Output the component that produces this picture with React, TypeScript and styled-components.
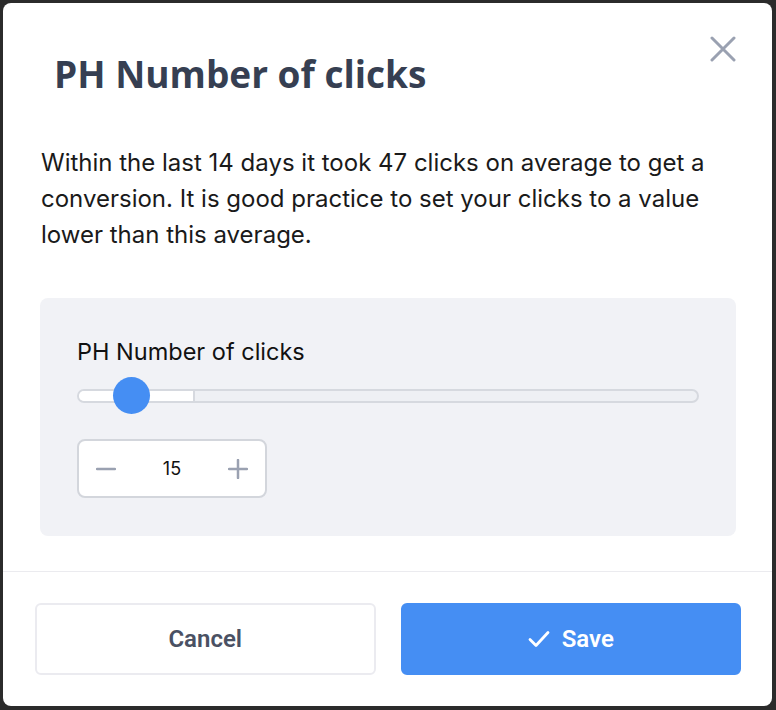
import React, { useState } from "react";
import styled, { createGlobalStyle } from "styled-components";

const Global = createGlobalStyle`
  html, body { margin: 0; padding: 0; background: #2b2b2b; }
  body { width: 776px; height: 710px; overflow: hidden; }
`;

const Dialog = styled.div`
  margin: 3px 0 0 3px;
  width: 769px;
  height: 703px;
  background: #ffffff;
  border-radius: 8px;
  display: flex;
  flex-direction: column;
  position: relative;
  box-sizing: border-box;
`;

const Body = styled.div`
  padding: 50px 36px 0 37px;
  display: flex;
  flex-direction: column;
  flex: 1;
`;

const Title = styled.h1`
  margin: 0 0 0 14px;
  font-family: "Open Sans", sans-serif;
  font-weight: 700;
  font-size: 37px;
  line-height: 41px;
  color: #363f52;
`;

const CloseButton = styled.button`
  position: absolute;
  top: 31px;
  right: 34px;
  width: 30px;
  height: 30px;
  padding: 0;
  border: none;
  background: transparent;
  display: flex;
  align-items: center;
  justify-content: center;
`;

const Description = styled.p`
  margin: 51px 0 0 1px;
  font-family: "Inter", sans-serif;
  font-size: 24px;
  line-height: 36px;
  color: #1a1a1a;
`;

const Panel = styled.div`
  margin-top: 45px;
  background: #f1f2f6;
  border-radius: 8px;
  height: 238px;
  box-sizing: border-box;
  padding: 40px 37px 0 37px;
  display: flex;
  flex-direction: column;
`;

const Label = styled.div`
  font-family: "Inter", sans-serif;
  font-size: 23.5px;
  line-height: 28px;
  color: #111111;
`;

const SliderArea = styled.div`
  margin-top: 11px;
  height: 38px;
  position: relative;
  display: flex;
  align-items: center;
`;

const Track = styled.div`
  width: 100%;
  height: 14px;
  box-sizing: border-box;
  border: 2px solid #d6d9df;
  border-radius: 7px;
  background: #eef0f4;
  overflow: hidden;
  display: flex;
`;

const Fill = styled.div`
  height: 100%;
  background: #ffffff;
  border-right: 2px solid #d6d9df;
`;

const Thumb = styled.div`
  position: absolute;
  top: 0;
  width: 37px;
  height: 37px;
  border-radius: 50%;
  background: #458ef3;
`;

const Stepper = styled.div`
  margin-top: 24px;
  width: 190px;
  height: 59px;
  box-sizing: border-box;
  border: 2px solid #d3d6dc;
  border-radius: 8px;
  background: #ffffff;
  display: flex;
  align-items: center;
  justify-content: space-between;
  padding: 0 16px 0 16px;
`;

const StepButton = styled.button`
  width: 22px;
  height: 22px;
  padding: 0;
  border: none;
  background: transparent;
  display: flex;
  align-items: center;
  justify-content: center;
`;

const Value = styled.span`
  font-family: "Inter", sans-serif;
  font-size: 18px;
  color: #111111;
`;

const Divider = styled.div`
  height: 2px;
  background: #ebebef;
  margin-top: 35px;
`;

const Footer = styled.div`
  display: flex;
  gap: 25px;
  padding: 31px 31px 31px 32px;
`;

const Button = styled.button<{ $primary?: boolean }>`
  flex: 1;
  height: 72px;
  box-sizing: border-box;
  border-radius: 6px;
  border: 2px solid ${(p) => (p.$primary ? "#458ef3" : "#ebebf0")};
  background: ${(p) => (p.$primary ? "#458ef3" : "#ffffff")};
  color: ${(p) => (p.$primary ? "#ffffff" : "#4a5163")};
  font-family: "Roboto", sans-serif;
  font-weight: 600;
  font-size: 24px;
  display: flex;
  align-items: center;
  justify-content: center;
  gap: 12px;
`;

export default function App() {
  const [value, setValue] = useState(15);
  const min = 1;
  const max = 100;
  const thumbLeft = 36;
  return (
    <>
      <Global />
      <Dialog>
        <CloseButton aria-label="Close">
          <svg width="26" height="26" viewBox="0 0 26 26">
            <path d="M2 2 L24 24 M24 2 L2 24" stroke="#9aa1b1" strokeWidth="3" strokeLinecap="round" />
          </svg>
        </CloseButton>
        <Body>
          <Title>PH Number of clicks</Title>
          <Description>
            Within the last 14 days it took 47 clicks on average to get a conversion. It is good practice to set your clicks to a value lower than this average.
          </Description>
          <Panel>
            <Label>PH Number of clicks</Label>
            <SliderArea>
              <Track>
                <Fill style={{ width: 114 }} />
              </Track>
              <Thumb style={{ left: thumbLeft }} />
            </SliderArea>
            <Stepper>
              <StepButton aria-label="Decrease" onClick={() => setValue(Math.max(min, value - 1))}>
                <svg width="20" height="20" viewBox="0 0 20 20">
                  <path d="M1 10 H19" stroke="#9aa1b1" strokeWidth="2.5" strokeLinecap="round" />
                </svg>
              </StepButton>
              <Value>{value}</Value>
              <StepButton aria-label="Increase" onClick={() => setValue(Math.min(max, value + 1))}>
                <svg width="20" height="20" viewBox="0 0 20 20">
                  <path d="M1 10 H19 M10 1 V19" stroke="#9aa1b1" strokeWidth="2.5" strokeLinecap="round" />
                </svg>
              </StepButton>
            </Stepper>
          </Panel>
        </Body>
        <Divider />
        <Footer>
          <Button>Cancel</Button>
          <Button $primary>
            <svg width="22" height="18" viewBox="0 0 22 18">
              <path d="M2 9.5 L8 15.5 L20 2.5" stroke="#ffffff" strokeWidth="2.8" fill="none" strokeLinecap="round" strokeLinejoin="round" />
            </svg>
            Save
          </Button>
        </Footer>
      </Dialog>
    </>
  );
}
